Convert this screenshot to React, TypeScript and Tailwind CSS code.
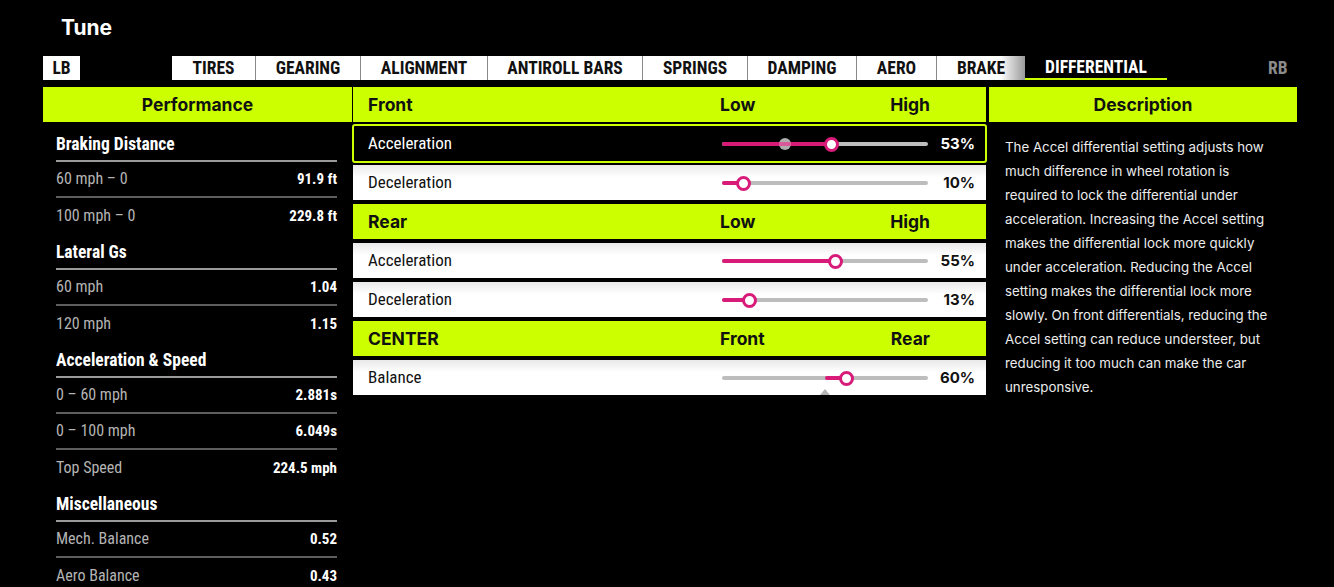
import React from 'react';

const cond = "font-['Roboto_Condensed','Liberation_Sans_Narrow','DejaVu_Sans_Condensed',Roboto,sans-serif] font-stretch-condensed";
const inter = "font-['Inter','Noto_Sans',sans-serif]";

const tabs = [
  { label: 'TIRES', w: 'w-[84px]' },
  { label: 'GEARING', w: 'w-[105px]' },
  { label: 'ALIGNMENT', w: 'w-[127px]' },
  { label: 'ANTIROLL BARS', w: 'w-[155px]' },
  { label: 'SPRINGS', w: 'w-[105px]' },
  { label: 'DAMPING', w: 'w-[109px]' },
  { label: 'AERO', w: 'w-[80px]' },
];

const perf = [
  {
    title: 'Braking Distance',
    rows: [
      ['60 mph – 0', '91.9 ft'],
      ['100 mph – 0', '229.8 ft'],
    ],
  },
  {
    title: 'Lateral Gs',
    rows: [
      ['60 mph', '1.04'],
      ['120 mph', '1.15'],
    ],
  },
  {
    title: 'Acceleration & Speed',
    rows: [
      ['0 – 60 mph', '2.881s'],
      ['0 – 100 mph', '6.049s'],
      ['Top Speed', '224.5 mph'],
    ],
  },
  {
    title: 'Miscellaneous',
    rows: [
      ['Mech. Balance', '0.52'],
      ['Aero Balance', '0.43'],
    ],
  },
];

const description = [
  'The Accel differential setting adjusts how',
  'much difference in wheel rotation is',
  'required to lock the differential under',
  'acceleration. Increasing the Accel setting',
  'makes the differential lock more quickly',
  'under acceleration. Reducing the Accel',
  'setting makes the differential lock more',
  'slowly. On front differentials, reducing the',
  'Accel setting can reduce understeer, but',
  'reducing it too much can make the car',
  'unresponsive.',
];

const TRACK = 206;

function Slider({ value, center, ghost }: { value: number; center?: boolean; ghost?: number }) {
  const pos = (value / 100) * TRACK;
  const start = center ? TRACK / 2 : 0;
  return (
    <div className="relative w-[206px] h-[15px] flex items-center">
      <div className="w-full h-[4px] rounded-full bg-[#bdbdbd]" />
      <div
        className="absolute h-[4px] rounded-full bg-[#d81b78]"
        style={{ left: Math.min(start, pos), width: Math.abs(pos - start) }}
      />
      {ghost !== undefined && (
        <div
          className="absolute w-[12px] h-[12px] -ml-[6px] rounded-full bg-[#d9d9d9]/80 overflow-hidden"
          style={{ left: (ghost / 100) * TRACK }}
        >
          <div className="mt-[4px] h-[4px] bg-[#d81b78]/60" />
        </div>
      )}
      <div
        className="absolute w-[15px] h-[15px] -ml-[7px] rounded-full border-[3px] border-[#d81b78] bg-white"
        style={{ left: pos }}
      />
      {center && (
        <div className="absolute left-[98px] top-[18px] w-0 h-0 border-l-[5px] border-r-[5px] border-b-[6px] border-l-transparent border-r-transparent border-b-[#b5b5b5]" />
      )}
    </div>
  );
}

function GroupHeader({ title, left, right }: { title: string; left: string; right: string }) {
  return (
    <div className={`h-[35px] pt-[2px] bg-[#ccff00] flex items-center pl-[15px] pr-[11px] text-[17.5px] font-bold text-[#111] ${inter}`}>
      <div className="flex-1">{title}</div>
      <div className="w-[210px] flex justify-between">
        <span>{left}</span>
        <span>{right}</span>
      </div>
      <div className="w-[45px]" />
    </div>
  );
}

function SettingRow({ label, value, center }: { label: string; value: number; center?: boolean }) {
  return (
    <div className="h-[35px] pt-[1px] bg-white bg-[linear-gradient(180deg,#e9e9e9_0%,#ffffff_35%)] flex items-center pl-[15px] pr-[11px]">
      <div className={`flex-1 text-[17px] text-[#111] ${cond}`}>{label}</div>
      <Slider value={value} center={center} />
      <div className={`w-[47px] text-right text-[15px] font-bold text-[#111] ${inter}`}>{value}%</div>
    </div>
  );
}

export default function App() {
  return (
    <div className="w-[1334px] h-[587px] bg-black overflow-hidden text-white">
      {/* title */}
      <div className={`h-[56px] pl-[61px] pt-[14px] text-[21px] font-bold leading-[28px] ${inter}`}>Tune</div>

      {/* tab bar */}
      <div className={`h-[24px] flex items-stretch pl-[43px] text-[17.5px] font-bold ${cond}`}>
        <div className="w-[37px] bg-white text-[#111] flex items-center justify-center">LB</div>
        <div className="w-[92px]" />
        {tabs.map((t) => (
          <div
            key={t.label}
            className={`${t.w} bg-white text-[#111] border-r border-[#8a8a8a] flex items-center justify-center`}
          >
            {t.label}
          </div>
        ))}
        <div className="w-[88px] bg-[linear-gradient(90deg,#ffffff_72%,#9a9a9a_100%)] text-[#111] flex items-center justify-center">
          BRAKE
        </div>
        <div className="w-[142px] border-b-2 border-[#ccff00] flex items-center justify-center text-white">
          DIFFERENTIAL
        </div>
        <div className="w-[101px]" />
        <div className="flex items-center text-[#8c8c8c]">RB</div>
      </div>

      {/* main columns */}
      <div className="mt-[7px] flex pl-[43px] items-start">
        {/* performance */}
        <div className="w-[309px]">
          <div className={`h-[35px] pt-[2px] bg-[#ccff00] flex items-center justify-center text-[17.5px] font-bold text-[#111] ${inter}`}>
            Performance
          </div>
          <div className={`mt-[4px] pl-[13px] pr-[15px] ${cond}`}>
            {perf.map((sec) => (
              <div key={sec.title}>
                <div className="h-[36px] pt-[2px] flex items-center border-b-2 border-[#9a9a9a] text-[17.5px] font-bold text-white">
                  {sec.title}
                </div>
                {sec.rows.map(([k, v], i) => (
                  <div
                    key={k}
                    className={`h-[36px] flex items-center justify-between ${i < sec.rows.length - 1 ? 'border-b-2 border-[#5e5e5e]' : ''}`}
                  >
                    <span className="text-[16px] text-[#b4b4b4]">{k}</span>
                    <span className="text-[15px] font-bold text-white">{v}</span>
                  </div>
                ))}
              </div>
            ))}
          </div>
        </div>

        {/* settings */}
        <div className="ml-[1px] w-[633px] flex flex-col gap-[4px]">
          <GroupHeader title="Front" left="Low" right="High" />
          <div className="-mx-[1px] -my-[2px] h-[39px] pt-[1px] rounded-[3px] border-2 border-[#ccff00] bg-black flex items-center pl-[14px] pr-[10px]">
            <div className={`flex-1 text-[17px] text-white ${cond}`}>Acceleration</div>
            <Slider value={53} ghost={30.5} />
            <div className={`w-[47px] text-right text-[15px] font-bold text-white ${inter}`}>53%</div>
          </div>
          <SettingRow label="Deceleration" value={10} />
          <GroupHeader title="Rear" left="Low" right="High" />
          <SettingRow label="Acceleration" value={55} />
          <SettingRow label="Deceleration" value={13} />
          <GroupHeader title="CENTER" left="Front" right="Rear" />
          <SettingRow label="Balance" value={60} center />
        </div>

        {/* description */}
        <div className="ml-[3px] w-[308px]">
          <div className={`h-[35px] pt-[2px] bg-[#ccff00] flex items-center justify-center text-[17.5px] font-bold text-[#111] ${inter}`}>
            Description
          </div>
          <div className={`pl-[16px] pt-[13px] text-[13.3px] leading-[24px] text-[#ececec] ${inter}`}>
            {description.map((line) => (
              <div key={line} className="whitespace-nowrap">{line}</div>
            ))}
          </div>
        </div>
      </div>
    </div>
  );
}
